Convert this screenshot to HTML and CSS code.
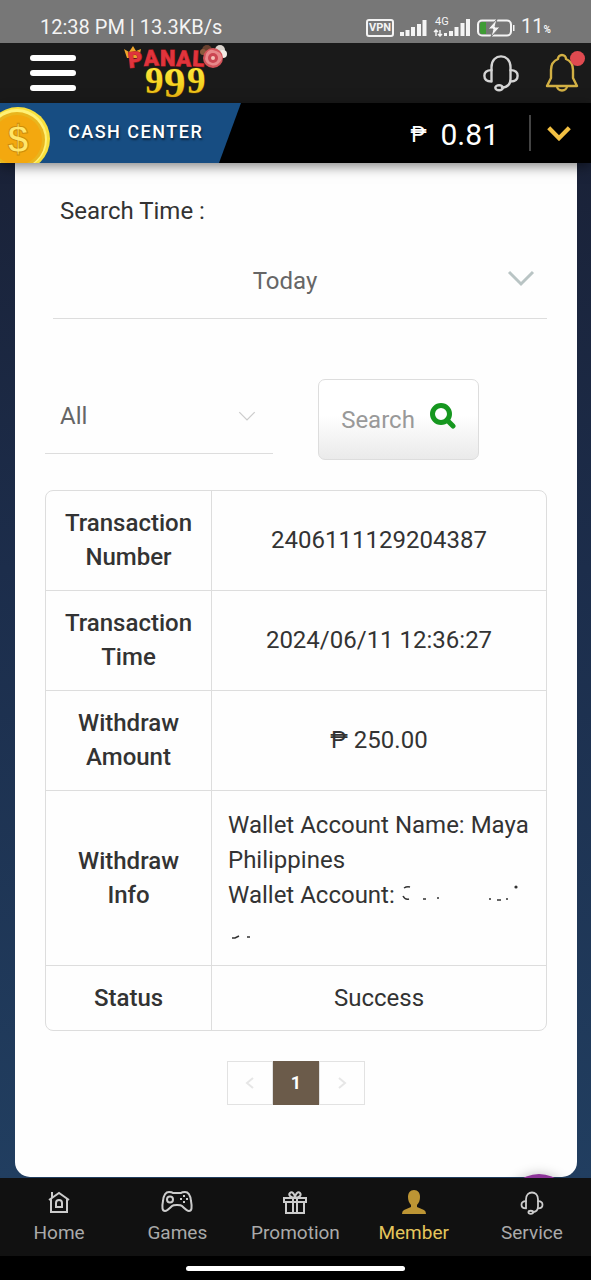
FILE: index.html
```
<!DOCTYPE html>
<html lang="en">
<head>
<meta charset="utf-8">
<meta name="viewport" content="width=device-width, initial-scale=1">
<title>Cash Center</title>
<link rel="stylesheet" href="styles.css">
</head>
<body>
<svg class="defs" aria-hidden="true">
  <symbol id="headset" viewBox="0 0 40 40">
    <g fill="none" stroke="currentColor" stroke-linecap="round" stroke-linejoin="round">
      <path d="M10 28V14C10 6 15 2.500 20 2.500S30 6 30 14V26C30 32 27 35 21 35.500"/>
      <path d="M10 17C5 17 2.500 19 2.500 23S5 29 10 29M30 17C35 17 37.500 19 37.500 23S35 29 30 29"/>
      <ellipse cx="18" cy="35.500" rx="4" ry="2.600"/>
    </g>
  </symbol>
  <symbol id="chevron" viewBox="0 0 28 18">
    <path d="M2 3L14 15L26 3" fill="none" stroke="currentColor"/>
  </symbol>
</svg>

<div class="status">
  <span class="status-text">12:38 PM | 13.3KB/s</span>
  <div class="status-icons">
    <span class="vpn">VPN</span>
    <svg width="27" height="18" viewBox="0 0 27 18" aria-hidden="true"><path d="M0 13h4v4h-4zM5.500 11h4v6h-4zM11 8h4v9h-4zM17 5h4v12h-4zM22.500 1h4v16h-4z" fill="#f4f4f4"/></svg>
    <div class="mobile">
      <span class="net">4G</span>
      <svg width="38" height="20" viewBox="0 0 38 20" aria-hidden="true"><path d="M11 15h3v3h-3zM16 13h4v5h-4zM21.500 9h4v9h-4zM27.500 5h4v13h-4zM33 1h4v17h-4z" fill="#f4f4f4"/><path d="M3 18v-6M1 14l2-2 2 2M7 12v6M5 16l2 2 2-2" fill="none" stroke="#f4f4f4" stroke-width="1.500"/></svg>
    </div>
    <svg width="38" height="18" viewBox="0 0 38 18" aria-hidden="true"><rect x="1" y="1.500" width="33" height="15" rx="4" fill="none" stroke="#f4f4f4" stroke-width="2"/><path d="M5 3h4v12H5q-2 0-2-2V5q0-2 2-2" fill="#3f9c35"/><path d="M36 6h1.500v6H36z" fill="#f4f4f4"/><path d="M20 0L11 10h5l-2 8 9-10h-5z" fill="#f4f4f4" stroke="#777" stroke-width="1"/></svg>
    <span class="battery">11<small>%</small></span>
  </div>
</div>

<header class="topbar">
  <button class="menu" aria-label="Menu"><span></span><span></span><span></span></button>
  <a class="logo" href="#" aria-label="Panalo 999">
    <svg width="108" height="58" viewBox="0 0 108 58">
      <defs>
        <linearGradient id="gold" x1="0" y1="0" x2="0" y2="1"><stop offset="0" stop-color="#fff04a"/><stop offset=".55" stop-color="#f5d321"/><stop offset="1" stop-color="#d99a08"/></linearGradient>
      </defs>
      <path d="M2 5l5 3 4-6 3 5 5-2-2 9H5z" fill="#efa62c"/>
      <text class="logo-red" x="7 22 38 54 70" y="24 22 22 22 22" rotate="-6 -3 0 2 3">PANAL</text>
      <circle cx="85" cy="6" r="5" fill="#69412f"/><circle cx="98" cy="6" r="5" fill="#d9d2cc"/><circle cx="101" cy="10" r="4" fill="#f2ece6"/><circle cx="81" cy="8" r="3" fill="#8c5a3c"/>
      <circle cx="91" cy="14" r="10" fill="#d4535a"/>
      <path d="M84 10q3-5 7-4t7 3q4 5 0 9-4 5-9 3-5-1-6-6z" fill="#e8888a"/>
      <circle cx="91" cy="14" r="5" fill="#cb4551"/><circle cx="91" cy="14" r="2" fill="#f5c2b8"/>
      <text class="logo-gold" y="49"><tspan x="23">9</tspan><tspan class="mid" x="42" y="53">9</tspan><tspan x="65" y="49">9</tspan></text>
    </svg>
  </a>
  <div class="top-actions">
    <button class="icon-btn" aria-label="Support"><svg class="support" aria-hidden="true"><use href="#headset"/></svg></button>
    <button class="icon-btn bell" aria-label="Notifications">
      <svg width="36" height="40" viewBox="0 0 36 40" aria-hidden="true"><g fill="none" stroke="#d2b044" stroke-width="2.400" stroke-linejoin="round"><path d="M14 6a4 4 0 0 1 8 0c5 2 7 6 7 11v8l4 8H3l4-8v-8c0-5 2-9 7-11z"/><path d="M13 33a5 4.500 0 0 0 10 0"/></g></svg>
      <span class="dot"></span>
    </button>
  </div>
</header>

<section class="cash">
  <div class="cash-title">
    <svg class="coin" width="52" height="60" viewBox="0 0 52 60" aria-hidden="true"><circle cx="18" cy="36" r="32" fill="#f8e03c"/><circle cx="17" cy="36" r="30" fill="#fff176"/><circle cx="17" cy="37" r="28" fill="#e9b51e"/><circle cx="17" cy="37" r="25" fill="#f3a80f"/><text x="18" y="49" class="coin-sign">$</text></svg>
    <h1>CASH CENTER</h1>
  </div>
  <div class="balance"><span class="peso">₱</span><span>0.81</span></div>
  <button class="expand" aria-label="Expand balance"><svg class="chev chev-gold" aria-hidden="true"><use href="#chevron"/></svg></button>
</section>

<main class="page">
  <div class="card">
    <form class="filters">
      <label for="range">Search Time :</label>
      <div class="field range">
        <select id="range"><option>Today</option></select>
        <svg class="chev chev-large" aria-hidden="true"><use href="#chevron"/></svg>
      </div>
      <div class="filter-row">
        <div class="field kind">
          <select aria-label="Type"><option>All</option></select>
          <svg class="chev chev-small" aria-hidden="true"><use href="#chevron"/></svg>
        </div>
        <button class="search" type="button"><span>Search</span>
          <svg width="26" height="26" viewBox="0 0 26 26" aria-hidden="true"><circle cx="11" cy="11" r="8.500" fill="none" stroke="#16971f" stroke-width="5"/><path d="M17 17l6 6" stroke="#16971f" stroke-width="5" stroke-linecap="round"/></svg>
        </button>
      </div>
    </form>

    <table class="record">
      <tbody>
        <tr><th scope="row">Transaction Number</th><td>2406111129204387</td></tr>
        <tr><th scope="row">Transaction Time</th><td>2024/06/11 12:36:27</td></tr>
        <tr><th scope="row">Withdraw Amount</th><td>₱ 250.00</td></tr>
        <tr class="info"><th scope="row">Withdraw Info</th><td>
          <p>Wallet Account Name: Maya Philippines</p>
          <p>Wallet Account: <svg width="120" height="18" viewBox="0 0 120 18" aria-hidden="true"><g fill="none" stroke="#333" stroke-width="1.500"><path d="M3 3q3-2 6-1M2 11q2 4 6 3M22 14h3M36 13h2" /><path d="M88 14h2M96 15h4M105 14h2" /></g><circle cx="115" cy="2" r="1.600" fill="#333"/></svg></p>
          <p class="rest"><svg width="28" height="6" viewBox="0 0 28 6" aria-hidden="true"><path d="M4 4h3l4-2M19 3h3" fill="none" stroke="#333" stroke-width="1.500"/></svg></p>
        </td></tr>
        <tr><th scope="row">Status</th><td>Success</td></tr>
      </tbody>
    </table>

    <nav class="pager" aria-label="Pages">
      <button aria-label="Previous page" disabled><svg width="10" height="12" viewBox="0 0 10 12"><path d="M8 1L2 6l6 5" fill="none" stroke="#e6e6e6" stroke-width="2"/></svg></button>
      <button class="current" aria-current="page">1</button>
      <button aria-label="Next page" disabled><svg width="10" height="12" viewBox="0 0 10 12"><path d="M2 1l6 5-6 5" fill="none" stroke="#e6e6e6" stroke-width="2"/></svg></button>
    </nav>
  </div>
  <button class="float" aria-label="Quick actions"></button>
</main>

<nav class="tabs" aria-label="Main">
  <a href="#"><svg width="24" height="26" viewBox="0 0 24 26" aria-hidden="true"><g fill="none" stroke="currentColor" stroke-width="2"><path d="M2 10L12 3l10 7M4 9v13h16V9M5 8V2"/><path d="M9 17v-4a3 3 0 0 1 6 0v4z"/></g></svg>Home</a>
  <a href="#"><svg width="34" height="26" viewBox="0 0 34 26" aria-hidden="true"><g fill="none" stroke="currentColor" stroke-width="2"><path d="M9 2q3 0 4 1h8q1-1 4-1 5 0 6 9 2 10-2 10-2 0-7-5-1-1-5-1t-5 1q-5 5-7 5-4 0-2-10Q4 2 9 2z"/><circle cx="10" cy="9.500" r="3"/></g><path d="M23 5h2v2h-2zM23 11h2v2h-2zM20 8h2v2h-2zM26 8h2v2h-2z" fill="currentColor"/></svg>Games</a>
  <a href="#"><svg width="26" height="26" viewBox="0 0 26 26" aria-hidden="true"><g fill="none" stroke="currentColor" stroke-width="2"><path d="M2 8h22v4H2zM4 12v11h18V12M11 8v15M15 8v15M13 8C9 8 6 5 8 3s5 1 5 5c0-4 3-7 5-5s-1 5-5 5z"/></g></svg>Promotion</a>
  <a href="#" class="active" aria-current="page"><svg width="28" height="26" viewBox="0 0 28 26" aria-hidden="true"><path d="M14 0c4 0 6 3 6 7 0 3-1 6-3 8v2l7 3q2 1 2 4H2q0-3 2-4l7-3v-2c-2-2-3-5-3-8 0-4 2-7 6-7z" fill="#bd9534"/></svg>Member</a>
  <a href="#"><svg class="tab-headset" width="24" height="26" aria-hidden="true"><use href="#headset"/></svg>Service</a>
</nav>
<div class="gesture"><span></span></div>
</body>
</html>
```
FILE: styles.css
```
* { box-sizing: border-box; }
body {
  margin: 0;
  min-height: 100vh;
  display: flex;
  flex-direction: column;
  font-family: Roboto, "Noto Sans", sans-serif;
  font-size: 24px;
  line-height: 34px;
  color: #333;
  background: #000;
}
button, select { font: inherit; color: inherit; }
button { padding: 0; border: 0; background: none; }
svg { display: block; flex: none; }
a { color: inherit; text-decoration: none; }
.defs { position: absolute; width: 0; height: 0; }

.status {
  height: 43px;
  padding: 12px 40px 0;
  display: flex;
  justify-content: space-between;
  background: #777;
  color: #f4f4f4;
  font-size: 20px;
  line-height: 30px;
}
.status-icons { display: flex; align-items: center; gap: 6px; }
.vpn {
  border: 2px solid #f4f4f4;
  border-radius: 3px;
  padding: 0 1px;
  font-size: 11px;
  font-weight: 700;
  line-height: 14px;
}
.mobile { position: relative; }
.net { position: absolute; left: 2px; top: -2px; font-size: 11px; line-height: 12px; }
.battery small { font-size: 10px; font-weight: 700; }

.topbar {
  height: 60px;
  padding: 0 11px 0 30px;
  display: flex;
  align-items: center;
  background: #1a1a1a;
}
.menu { display: grid; gap: 9px; width: 46px; }
.menu span { height: 6px; border-radius: 3px; background: #fff; }
.logo { margin-left: 46px; }
.logo-red { font-family: Roboto, sans-serif; font-size: 22px; font-weight: 900; fill: #e0343c; stroke: #a81a22; stroke-width: 1px; paint-order: stroke; }
.logo-gold { font-family: "Liberation Serif", serif; font-size: 37px; font-weight: 700; fill: url(#gold); stroke: #4d3200; stroke-width: 1px; paint-order: stroke; }
.logo-gold .mid { font-size: 43px; }
.top-actions { margin-left: auto; display: flex; gap: 24px; }
.icon-btn { position: relative; color: #d4d4d4; }
.support { width: 38px; height: 38px; stroke-width: 2.5px; }
.dot { position: absolute; right: -5px; top: -2px; width: 15px; height: 15px; border-radius: 50%; background: #e04a50; }

.cash {
  position: relative;
  z-index: 1;
  height: 60px;
  display: flex;
  align-items: center;
  background: #000;
  color: #fff;
  box-shadow: 0 3px 12px rgba(0, 0, 0, .5);
}
.cash-title {
  width: 241px;
  height: 60px;
  display: flex;
  gap: 16px;
  background: #174d82;
  clip-path: polygon(0 0, 100% 0, 219px 100%, 0 100%);
}
.cash h1 {
  margin: 0;
  font-size: 18px;
  font-weight: 500;
  line-height: 58px;
  letter-spacing: 1.5px;
  text-shadow: 1px 2px 2px rgba(0, 0, 0, .5);
}
.coin-sign { font: 700 38px "Liberation Sans", sans-serif; fill: #ffe66b; stroke: #cf8d08; stroke-width: 1px; text-anchor: middle; }
.balance { margin-left: auto; display: flex; align-items: center; gap: 14px; padding-top: 3px; padding-right: 30px; font-size: 30px; }
.peso { font-size: 22px; }
.expand { height: 36px; width: 62px; border-left: 2px solid #444; padding-left: 16px; }
.chev { stroke-width: 3px; }
.chev-gold { width: 24px; height: 16px; color: #f3c043; stroke-width: 5px; }

.page {
  position: relative;
  flex: 1;
  padding: 0 14px 0 15px;
  overflow: hidden;
  background: linear-gradient(#1a2238, #1c2d4b 40%, #213e60);
}
.card {
  height: 100%;
  padding: 31px 30px 72px;
  border-radius: 0 0 15px 15px;
  background: #fefefe;
}
.filters label { display: block; padding-left: 15px; }
.field { position: relative; border-bottom: 1px solid #ddd; }
.field select {
  display: block;
  width: 100%;
  border: 0;
  background: none;
  appearance: none;
  color: #666;
}
.field .chev { position: absolute; pointer-events: none; }
.range { margin: 16px 0 0 8px; }
.range select { height: 74px; padding: 0 30px 0 0; text-align-last: center; }
.chev-large { right: 12px; top: 25px; width: 28px; height: 18px; color: #b9c4c4; }
.filter-row { display: flex; align-items: flex-start; gap: 45px; margin-top: 60px; padding-right: 68px; }
.kind { flex: 1; }
.kind select { height: 74px; padding: 0 15px; }
.chev-small { right: 17px; top: 31px; width: 18px; height: 12px; color: #ccc; stroke-width: 2px; }
.search {
  display: flex;
  align-items: center;
  justify-content: center;
  gap: 15px;
  width: 161px;
  height: 81px;
  border: 1px solid #ddd;
  border-radius: 7px;
  background: linear-gradient(#fff 45%, #eaeaea);
  color: #999;
}
.search svg { margin-bottom: 8px; }

.record {
  width: 100%;
  margin-top: 30px;
  border: 1px solid #ddd;
  border-radius: 8px;
  border-spacing: 0;
  table-layout: fixed;
}
.record th, .record td { padding: 15px 16px; }
.record th { width: 166px; padding-inline: 15px; border-right: 1px solid #ddd; font-weight: 500; }
.record td { text-align: center; }
.record tr + tr > * { border-top: 1px solid #ddd; padding-bottom: 16px; }
.record tr:first-child > * { padding-bottom: 16px; }
.record tr:last-child > * { padding-bottom: 15px; }
.record .info td { text-align: left; padding-top: 17px; padding-bottom: 14px; }
.record p { margin: 0; line-height: 35px; }
.record p svg { display: inline-block; }
.record .rest { line-height: 38px; }

.pager { display: flex; justify-content: center; margin-top: 30px; }
.pager button {
  display: grid;
  place-items: center;
  width: 46px;
  height: 44px;
  border: 1px solid #e2e2e2;
  font-size: 18px;
  font-weight: 700;
}
.pager .current { background: #6b5b4a; border-color: #6b5b4a; color: #fff; }
.float {
  position: absolute;
  right: 19px;
  bottom: -62px;
  width: 66px;
  height: 66px;
  border-radius: 50%;
  background: #8c3398;
  box-shadow: 0 0 12px rgba(0, 0, 0, .25);
}

.tabs {
  height: 78px;
  padding-top: 12px;
  display: grid;
  grid-template-columns: repeat(5, 1fr);
  background: #111;
  color: #aaa;
  font-size: 19px;
  line-height: 32px;
}
.tabs a { display: flex; flex-direction: column; align-items: center; gap: 1px; }
.tabs svg { color: #ccc; }
.tabs .tab-headset { stroke-width: 3px; }
.tabs .active { color: #e5c55c; }
.gesture { height: 24px; display: flex; align-items: center; justify-content: center; }
.gesture span { width: 37%; height: 5px; border-radius: 3px; background: #fff; }
```
